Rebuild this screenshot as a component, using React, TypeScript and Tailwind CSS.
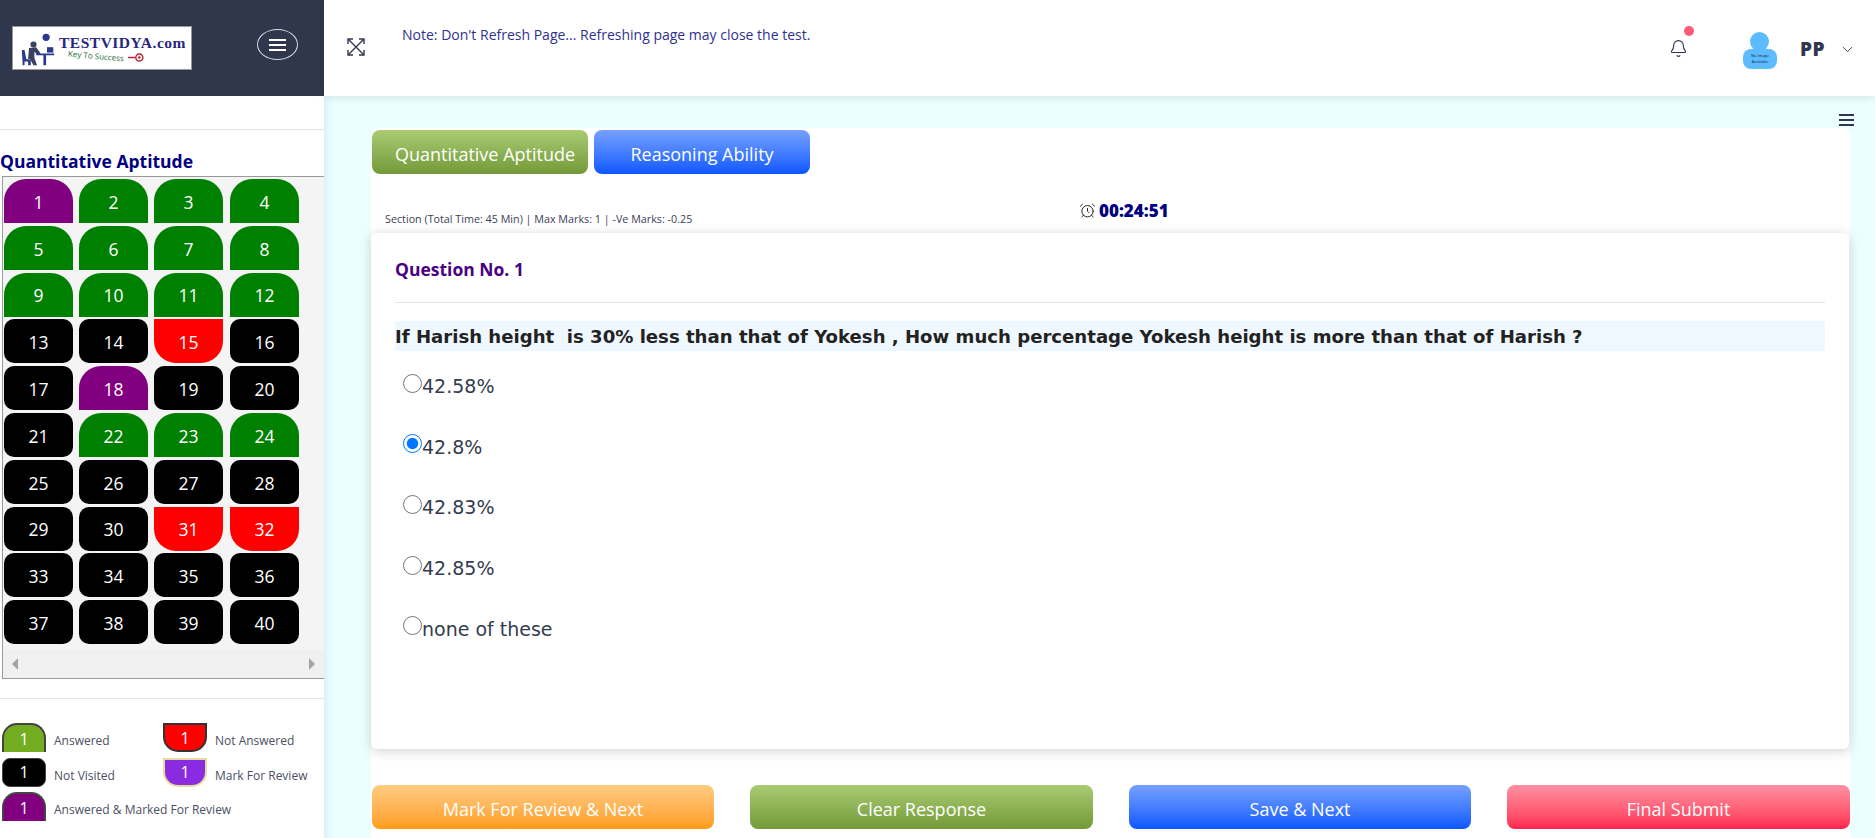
import { Bell, ChevronDown, AlarmClock } from "lucide-react"

type Tone = "green" | "purple" | "black" | "red"

const toneClass: Record<Tone, string> = {
  green: "bg-[#008000] rounded-t-[22px]",
  purple: "bg-[#800080] rounded-t-[22px]",
  black: "bg-black rounded-[10px]",
  red: "bg-[#ff0000] rounded-b-[22px]",
}

const questions: Tone[] = [
  "purple", "green", "green", "green",
  "green", "green", "green", "green",
  "green", "green", "green", "green",
  "black", "black", "red", "black",
  "black", "purple", "black", "black",
  "black", "green", "green", "green",
  "black", "black", "black", "black",
  "black", "black", "red", "red",
  "black", "black", "black", "black",
  "black", "black", "black", "black",
]

const options = ["42.58%", "42.8%", "42.83%", "42.85%", "none of these"]

function Logo() {
  return (
    <div className="relative h-[44px] w-[180px] shrink-0 border border-[#999] bg-white overflow-hidden">
      <svg viewBox="0 0 40 40" className="absolute left-[7px] top-[4px] h-[36px] w-[36px]" fill="#2b3a8c">
        <circle cx="29" cy="7" r="4" />
        <circle cx="15" cy="15" r="3.4" fill="#3a4060" />
        <path d="M10 19 L18 18 L23 25 L19 26 L16 23 L16 30 L19 38 L15 38 L11 31 L9 31 Z" fill="#3a4060" />
        <path d="M2 21 L5 21 L7 31 L12 32 L12 38 L9 38 L9 34 L5 34 L5 38 L3 38 Z" />
        <path d="M18 25 H38 V27 H29 V38 H26 V27 H18 Z" />
        <path d="M30 18 H37 V24 H30 Z" />
      </svg>
      <span className="absolute left-[46px] top-[8px] whitespace-nowrap font-['Liberation_Serif',serif] text-[15.5px] font-bold leading-none tracking-[0.5px] text-[#27277f]">
        TESTVIDYA.com
      </span>
      <span className="absolute left-[55px] top-[25px] rotate-[5deg] whitespace-nowrap text-[8px] leading-none text-[#2a6b3a]">
        Key To Success
      </span>
      <svg viewBox="0 0 24 12" className="absolute left-[115px] top-[24px] h-[13px] w-[17px]" fill="none">
        <path d="M0 6 H10" stroke="#c01f2f" strokeWidth="2" />
        <circle cx="16" cy="6" r="5" stroke="#c01f2f" strokeWidth="2" />
        <circle cx="16" cy="6" r="1.8" fill="#c01f2f" />
      </svg>
    </div>
  )
}

function ExpandIcon() {
  return (
    <svg viewBox="0 0 18 18" className="mt-[38px] h-[18px] w-[18px] text-[#30364c]" fill="none" stroke="currentColor" strokeWidth="1.4">
      <path d="M1.5 1.5 L16.5 16.5 M16.5 1.5 L1.5 16.5" />
      <path d="M1 6 V1 H6 M12 1 H17 V6 M17 12 V17 H12 M6 17 H1 V12" />
    </svg>
  )
}

function Avatar() {
  return (
    <div className="relative h-[37px] w-[34px]">
      <div className="absolute left-[7px] top-0 h-[19px] w-[19px] rounded-full bg-[#5cbcff]" />
      <div className="absolute bottom-0 left-0 flex h-[20px] w-[34px] flex-col items-center justify-center rounded-[8px] bg-[#5cbcff] text-[4px] leading-[6px] text-[#123]">
        <span>No Image</span>
        <span>Available</span>
      </div>
    </div>
  )
}

function LegendChip({ className }: { className: string }) {
  return (
    <span className={`flex h-[29px] w-[44px] shrink-0 items-center justify-center text-[16px] text-white ${className}`}>
      1
    </span>
  )
}

function LegendItem({ chip, label }: { chip: string; label: string }) {
  return (
    <div className="flex items-start gap-[8px]">
      <LegendChip className={chip} />
      <span className="mt-[9px] whitespace-nowrap text-[12px] leading-[18px] text-[#4a4f63]">{label}</span>
    </div>
  )
}

function Sidebar() {
  return (
    <aside className="flex w-[324px] shrink-0 flex-col bg-white">
      <div className="flex h-[96px] items-center bg-[#30364c] pl-[12px]">
        <Logo />
        <button className="mb-[7px] ml-[65px] flex h-[31px] w-[41px] items-center justify-center rounded-[50%] border border-[#d8d8e0]">
          <span className="flex w-[17px] flex-col gap-[3px]">
            <span className="h-[2px] bg-white" />
            <span className="h-[2px] bg-white" />
            <span className="h-[2px] bg-white" />
          </span>
        </button>
      </div>

      <div className="mt-[33px] border-t border-[#e4e4e4] pt-[20px]">
        <h3 className="text-[17.5px] font-bold leading-[23px] text-[#000080]">Quantitative Aptitude</h3>
        <div className="ml-[2px] mt-[3px] border-y border-l border-[#999] bg-[#f4f4f4]">
          <div className="grid grid-cols-[75px_75px_76px_68px] gap-y-[2.8px] pl-[1px] pt-[2px] pb-[6px]">
            {questions.map((tone, i) => (
              <div key={i} className={`flex h-[44px] w-[69px] items-center justify-center pt-[2px] text-[17.5px] text-white ${toneClass[tone]}`}>
                {i + 1}
              </div>
            ))}
          </div>
          <div className="flex h-[28px] items-center justify-between bg-[#f0f0f0] px-[9px]">
            <span className="h-0 w-0 border-y-[6px] border-r-[6px] border-y-transparent border-r-[#a3a3a3]" />
            <span className="h-0 w-0 border-y-[6px] border-l-[6px] border-y-transparent border-l-[#a3a3a3]" />
          </div>
        </div>
      </div>

      <div className="mt-[19px] border-t border-[#e4e4e4] pt-[24px]">
        <div className="grid grid-cols-[161px_1fr] gap-y-[5.5px] pl-[2px]">
          <LegendItem chip="bg-[#73ad21] rounded-t-[15px] border-2 border-[#444] border-b-0" label="Answered" />
          <LegendItem chip="bg-[#ff0000] rounded-b-[15px] border-2 border-[#333]" label="Not Answered" />
          <LegendItem chip="bg-black rounded-[8px] border border-[#444]" label="Not Visited" />
          <LegendItem chip="bg-[#8a2be2] rounded-b-[15px] border-2 border-[#e3dc9a]" label="Mark For Review" />
          <div className="col-span-2">
            <LegendItem chip="bg-[#800080] rounded-t-[15px] border-2 border-[#444] border-b-0" label="Answered & Marked For Review" />
          </div>
        </div>
      </div>
    </aside>
  )
}

function TopBar() {
  return (
    <header className="flex h-[96px] items-start bg-white pl-[23px] pr-[19px] shadow-[0_2px_8px_rgba(0,0,0,0.1)]">
      <ExpandIcon />
      <p className="ml-[37px] mt-[25px] text-[14px] leading-[20px] text-[#2e3192]">
        Note: Don't Refresh Page... Refreshing page may close the test.
      </p>
      <div className="ml-auto flex items-center">
        <div className="relative mt-[27px]">
          <Bell size={19} strokeWidth={1.4} className="text-[#30364c]" />
          <span className="absolute left-[15px] top-[-13px] h-[10px] w-[10px] rounded-full bg-[#ff5b77]" />
        </div>
        <div className="ml-[55px] mt-[32px]">
          <Avatar />
        </div>
        <span className="ml-[23px] mt-[28px] text-[19px] font-extrabold leading-[26px] tracking-[0.5px] text-[#30364c]">PP</span>
        <ChevronDown size={17} strokeWidth={1.3} className="ml-[14px] mt-[30px] text-[#30364c]" />
      </div>
    </header>
  )
}

function GradientButton({ className, label }: { className: string; label: string }) {
  return (
    <button className={`flex h-[44px] items-center justify-center rounded-[8px] pt-[4px] text-[18px] text-white ${className}`}>
      {label}
    </button>
  )
}

function QuestionCard() {
  return (
    <section className="mr-[-1px] h-[516px] rounded-[6px] bg-white px-[24px] shadow-[0_2px_12px_rgba(0,0,0,0.18)]">
      <h4 className="pt-[25px] text-[17.5px] font-bold leading-[22px] text-[#4b0082]">Question No. 1</h4>
      <hr className="mt-[22px] border-[#e4e4e4]" />
      <div className="mt-[18px] h-[30px] whitespace-pre bg-[#f0f8ff] font-['DejaVu_Sans',sans-serif] text-[18.1px] font-bold leading-[32px] text-[#222]">
        {"If Harish height  is 30% less than that of Yokesh , How much percentage Yokesh height is more than that of Harish ?"}
      </div>
      <div className="mt-[20px] flex flex-col gap-[30.7px] pl-[8px] font-['DejaVu_Sans',sans-serif] text-[19px] leading-[30px] text-[#333c50]">
        {options.map((opt, i) => (
          <label key={opt} className="flex h-[30px] items-center">
            <input type="radio" name="answer" defaultChecked={i === 1} className="m-0 h-[19px] w-[19px] -translate-y-[3px] accent-[#0075ff]" />
            <span>{opt}</span>
          </label>
        ))}
      </div>
    </section>
  )
}

export default function App() {
  return (
    <div className="flex h-[838px] w-[1875px] overflow-hidden font-['Open_Sans',sans-serif]">
      <Sidebar />
      <div className="flex min-w-0 flex-1 flex-col bg-[#ecffff] shadow-[inset_10px_0_10px_-8px_rgba(40,50,90,0.1)]">
        <TopBar />
        <main className="relative flex-1 pl-[47px] pr-[25px] pt-[32px]">
          <div className="absolute right-[21px] top-[18px] flex w-[15px] flex-col gap-[3px]">
            <span className="h-[2px] bg-[#30364c]" />
            <span className="h-[2px] bg-[#30364c]" />
            <span className="h-[2px] bg-[#30364c]" />
          </div>
          <div className="h-full rounded-t-[6px] bg-white">
            <div className="flex gap-[6px] pl-px pt-[2px]">
              <GradientButton label="Quantitative Aptitude" className="w-[216px] pl-[10px] bg-gradient-to-b from-[#aacb72] to-[#739a38]" />
              <GradientButton label="Reasoning Ability" className="w-[216px] bg-gradient-to-b from-[#76a0ff] to-[#0a55ff]" />
            </div>
            <div className="relative flex h-[59px] items-end pb-[6px] pl-[14px] text-[10.75px] text-[#3c4058]">
              <span>Section (Total Time: 45 Min) | Max Marks: 1 | -Ve Marks: -0.25</span>
              <span className="absolute left-[708px] top-[24px] flex items-center gap-[3px] text-[17px] font-extrabold text-[#000080]">
                <AlarmClock size={17} strokeWidth={1.4} className="text-[#222]" />
                00:24:51
              </span>
            </div>
            <div className="mr-[2px]">
              <QuestionCard />
            </div>
            <div className="mt-[36px] flex justify-between pl-px">
              <GradientButton label="Mark For Review & Next" className="w-[342px] bg-gradient-to-b from-[#ffcc80] to-[#ff9c0f]" />
              <GradientButton label="Clear Response" className="w-[343px] bg-gradient-to-b from-[#aacb72] to-[#739a38]" />
              <GradientButton label="Save & Next" className="w-[342px] bg-gradient-to-b from-[#76a0ff] to-[#0a55ff]" />
              <GradientButton label="Final Submit" className="w-[343px] bg-gradient-to-b from-[#ff8fa3] to-[#ff1f50]" />
            </div>
          </div>
        </main>
      </div>
    </div>
  )
}
